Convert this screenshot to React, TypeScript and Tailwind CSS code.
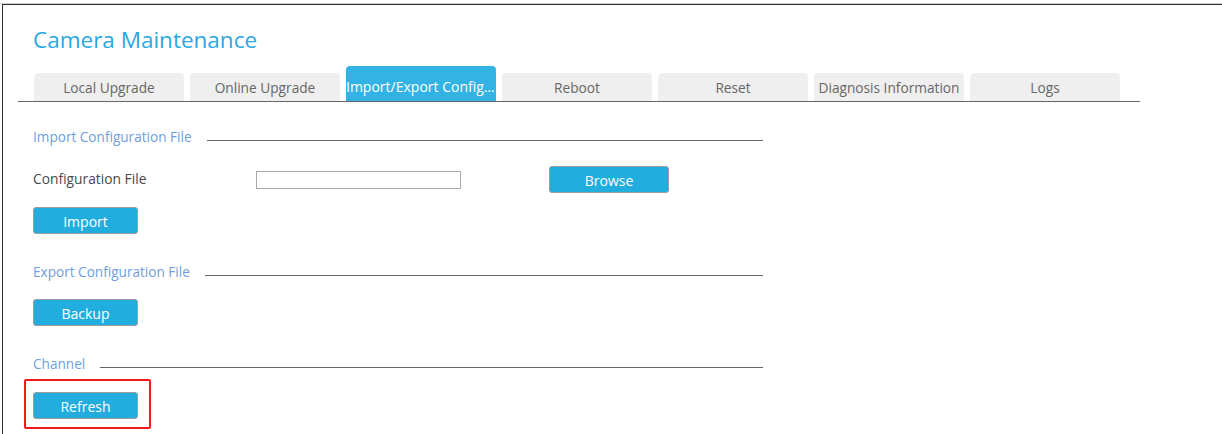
const tabs = [
  "Local Upgrade",
  "Online Upgrade",
  "Import/Export Configuration",
  "Reboot",
  "Reset",
  "Diagnosis Information",
  "Logs",
];

function Tab({ label, active }: { label: string; active?: boolean }) {
  if (active) {
    return (
      <div className="w-[150px] h-[35px] rounded-t-[4px] bg-[#33b3e4] flex items-end pb-[4px] overflow-hidden">
        <span className="block w-full whitespace-nowrap overflow-hidden text-ellipsis text-[14px] leading-[20px] text-white">
          {label}
        </span>
      </div>
    );
  }
  return (
    <div className="w-[150px] h-[28px] rounded-t-[4px] bg-[#efefef] flex items-end justify-center pb-[3px]">
      <span className="text-[13.7px] leading-[20px] text-[#666]">{label}</span>
    </div>
  );
}

function SectionTitle({ title, className }: { title: string; className?: string }) {
  return (
    <div className={"flex items-start gap-[15px] w-[730px] h-[20px] " + (className ?? "")}>
      <span className="text-[13.6px] leading-[20px] text-[#6f9ede] whitespace-nowrap">{title}</span>
      <div className="flex-1 h-px bg-[#666] mt-[13px]" />
    </div>
  );
}

function Btn({ label, className }: { label: string; className?: string }) {
  return (
    <button
      className={
        "w-[105px] h-[27px] rounded-[3px] border border-[#9d9d9d] bg-[#22addf] text-white text-[14px] leading-none pt-[2px] " +
        (className ?? "")
      }
    >
      {label}
    </button>
  );
}

export default function App() {
  return (
    <div className="w-[1222px] h-[434px] bg-white overflow-hidden font-['Open_Sans',sans-serif]">
      <div className="mt-[3px] border-t border-[#cfcfcf]">
        <div className="ml-[2px] border-t border-l border-[#2b3035] h-[440px]">
          <div className="pl-[30px] pt-[17px]">
            <h1 className="text-[22.5px] leading-[36px] text-[#2aa7e1]">Camera Maintenance</h1>
          </div>

          <div className="ml-[15px] mt-[8px] w-[1122px] border-b border-[#666] pl-[16px] flex items-end gap-[6px]">
            {tabs.map((t, i) => (
              <Tab key={t} label={t} active={i === 2} />
            ))}
          </div>

          <div className="pl-[30px] flex flex-col items-start">
            <SectionTitle title="Import Configuration File" className="mt-[25px]" />

            <div className="mt-[19px] h-[27px] flex items-center">
              <span className="w-[223px] text-[13.8px] text-[#4a4a4a]">Configuration File</span>
              <div className="w-[205px] h-[18px] border border-[#aaa] bg-white" />
              <Btn label="Browse" className="ml-[88px] w-[120px]" />
            </div>

            <Btn label="Import" className="mt-[14px]" />

            <SectionTitle title="Export Configuration File" className="mt-[28px]" />

            <Btn label="Backup" className="mt-[17px]" />

            <SectionTitle title="Channel" className="mt-[28px]" />

            <div className="relative mt-[18px]">
              <Btn label="Refresh" />
              <div className="absolute -top-[13px] -left-[9px] w-[127px] h-[50px] border-[2.5px] border-[#f51b1b] rounded-[2px] pointer-events-none" />
            </div>
          </div>
        </div>
      </div>
    </div>
  );
}
